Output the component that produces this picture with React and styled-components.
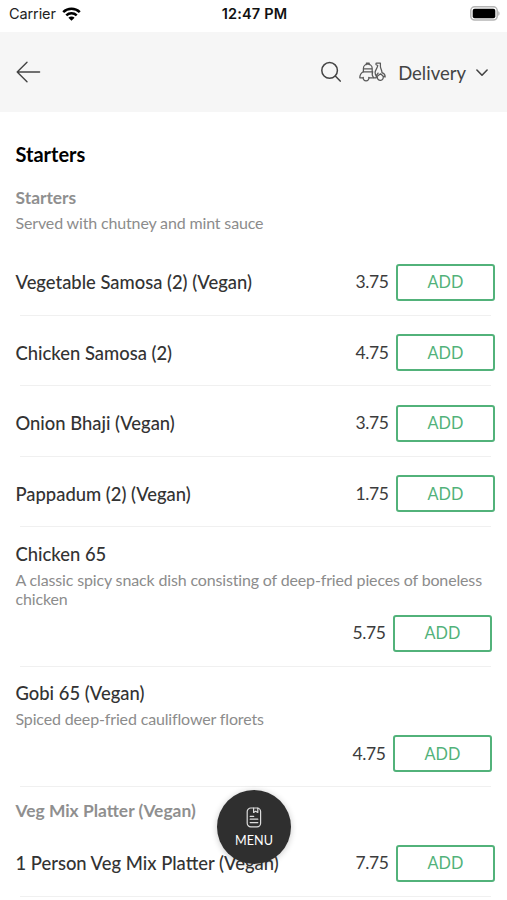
import React from 'react'
import styled, { createGlobalStyle } from 'styled-components'

const GlobalStyle = createGlobalStyle`
    *{
        box-sizing:border-box;
    }
    body{
        margin:0;
        background-color:#fff;
        overflow:hidden;
    }
`

const Container = styled.div`
    position:relative;
    width:507px;
    height:900px;
    overflow:hidden;
    background-color:#fff;
    font-family:Lato, sans-serif;
    color:#333;
    cursor:default;
`

const StatusBar = styled.div`
    display:grid;
    grid-template-columns:1fr auto 1fr;
    align-items:center;
    height:32px;
    padding:0 7px 5px 9px;
    font-family:Inter, sans-serif;
    font-size:14.5px;
    color:#222;
`

const Carrier = styled.div`
    display:flex;
    align-items:center;
    gap:6px;
    letter-spacing:-0.1px;
`

const Clock = styled.div`
    font-weight:600;
    color:#111;
    letter-spacing:0.15px;
`

const Battery = styled.svg`
    justify-self:end;
`

const Header = styled.div`
    display:flex;
    align-items:center;
    height:80px;
    padding:0 18px 0 16px;
    background-color:#f6f6f6;
`

const HeaderActions = styled.div`
    display:flex;
    align-items:center;
    margin-left:auto;
`

const Scooter = styled.svg`
    margin:0 12px 0 17px;
`

const DeliveryLabel = styled.span`
    font-size:18.5px;
    line-height:24px;
    color:#444;
    margin:2px 9px 0 0;
`

const Title = styled.div`
    padding:30px 16px 0 15.5px;
    font-size:20px;
    font-weight:700;
    line-height:24px;
    color:#000;
`

const GroupHeading = styled.div`
    height:${props => props.height}px;
    padding:${props => props.top}px 16px 0 15.5px;
`

const GroupName = styled.div`
    font-size:17.4px;
    font-weight:700;
    line-height:22px;
    color:#8f8f8f;
`

const Description = styled.div`
    margin-top:4px;
    font-size:16px;
    line-height:19.5px;
    letter-spacing:-0.15px;
    color:#8c8c8c;
`

const Row = styled.div`
    display:flex;
    align-items:center;
    height:70.5px;
    padding:4px 12px 0 15.5px;
`

const TallRow = styled.div`
    display:flex;
    flex-direction:column;
    height:${props => props.height}px;
    padding:14.5px 15px 15px 15.5px;
`

const ItemName = styled.div`
    font-size:18.4px;
    font-weight:500;
    line-height:24px;
    color:#333;
`

const Purchase = styled.div`
    display:flex;
    align-items:center;
    gap:7.5px;
    margin:${props => (props.$bottom ? 'auto 0 0 auto' : '0 0 0 auto')};
`

const Price = styled.span`
    font-size:17.5px;
    line-height:22px;
    letter-spacing:-0.4px;
    color:#3c3c3c;
`

const AddButton = styled.button`
    width:99px;
    height:37px;
    padding:0;
    border:2px solid #52b27a;
    border-radius:3px;
    background-color:#fff;
    color:#52b27a;
    font-family:inherit;
    font-size:16.3px;
    line-height:22px;
`

const Divider = styled.div`
    height:1px;
    margin:-1px 16px 0 20px;
    background-color:#f0f0f0;
`

const MenuButton = styled.div`
    position:absolute;
    left:217px;
    top:790px;
    width:74px;
    height:74px;
    display:flex;
    flex-direction:column;
    align-items:center;
    padding-top:17px;
    border-radius:50%;
    background-color:#2f2f2f;
    box-shadow:0 1px 6px rgba(0,0,0,0.22);
    color:#fff;
    font-size:12.6px;
    line-height:16px;
`

const MenuIcon = styled.svg`
    margin-bottom:5px;
`

const simpleItems = [
    { name: 'Vegetable Samosa (2) (Vegan)', price: '3.75' },
    { name: 'Chicken Samosa (2)', price: '4.75' },
    { name: 'Onion Bhaji (Vegan)', price: '3.75' },
    { name: 'Pappadum (2) (Vegan)', price: '1.75' },
]

const describedItems = [
    {
        name: 'Chicken 65',
        description: 'A classic spicy snack dish consisting of deep-fried pieces of boneless chicken',
        price: '5.75',
        height: 139.5,
    },
    {
        name: 'Gobi 65 (Vegan)',
        description: 'Spiced deep-fried cauliflower florets',
        price: '4.75',
        height: 120.5,
    },
]

const Buy = ({ price, bottom }) => (
    <Purchase $bottom={bottom}>
        <Price>{price}</Price>
        <AddButton>ADD</AddButton>
    </Purchase>
)

const SimpleItem = ({ item }) => (
    <>
        <Row>
            <ItemName>{item.name}</ItemName>
            <Buy price={item.price} />
        </Row>
        <Divider />
    </>
)

const DescribedItem = ({ item }) => (
    <>
        <TallRow height={item.height}>
            <ItemName>{item.name}</ItemName>
            <Description>{item.description}</Description>
            <Buy price={item.price} bottom />
        </TallRow>
        <Divider />
    </>
)

const App = () => (
    <Container>
        <GlobalStyle />
        <StatusBar>
            <Carrier>
                Carrier
                <svg width="19" height="14" viewBox="0 0 19 14" fill="none" stroke="#000" strokeWidth="2.5">
                    <path d="M1.2 5.2a11.8 11.8 0 0 1 16.6 0" />
                    <path d="M4.3 8.4a7.4 7.4 0 0 1 10.4 0" />
                    <path d="M9.5 13.8L6.4 10.7a4.4 4.4 0 0 1 6.2 0z" fill="#000" stroke="none" />
                </svg>
            </Carrier>
            <Clock>12:47 PM</Clock>
            <Battery width="30" height="15" viewBox="0 0 30 15">
                <rect x="0.8" y="0.8" width="26.4" height="13.2" rx="3.8" fill="#fff" stroke="#b5b5b5" strokeWidth="1.5" />
                <rect x="2.7" y="2.7" width="22.6" height="9.5" rx="2" fill="#000" />
                <path d="M28.3 5.2c1.6.5 1.6 4 0 4.5z" fill="#aaa" />
            </Battery>
        </StatusBar>
        <Header>
            <svg width="25" height="22" viewBox="0 0 25 22" fill="none" stroke="#444" strokeWidth="1.4" strokeLinecap="round" strokeLinejoin="round">
                <path d="M23.6 11H1.2M11 1.2L1.2 11l9.8 9.8" />
            </svg>
            <HeaderActions>
                <svg width="22" height="22" viewBox="0 0 22 22" fill="none" stroke="#444" strokeWidth="1.5" strokeLinecap="round">
                    <circle cx="9.6" cy="9.4" r="7.8" />
                    <path d="M15.3 15.1l4.9 5" />
                </svg>
                <Scooter width="27" height="20" viewBox="0 0 27 20" fill="none" stroke="#5a5a5a" strokeWidth="1.25" strokeLinecap="round" strokeLinejoin="round">
                    <path d="M4.4 9.8V6.6a4.4 4.4 0 0 1 8.8 0v3.2M7.4 2.5V1.1h2.8v1.4M4.4 6.8h8.8" />
                    <path d="M13.6 9.8H4.2C2.2 11 .8 13.2.8 15.8h3.4M9.9 15.8h7.3c-.2-2.3.7-3.6 2-4.7" />
                    <path d="M13.6 9.8c-.7 2-.4 4.2 1 5.8" />
                    <path d="M21.4 1.2h-3.8c-.8 0-1 1.5 0 1.8l1.1.3c.2 2.4-2.6 4.6-2.6 7.2 0 1.6.5 2.7 1.4 3.6M21.4 1.2v3c0 2.5 1.4 3.6 1.6 6.4 1.9.7 3.3 2.3 3.1 4.4l-1.8-.7-2.8-2.5-3.8 3" />
                    <path d="M4.2 15.4a2.9 2.9 0 1 0 5.7 0" />
                    <path d="M18.3 15.2a3 3 0 1 0 5.9-.6" />
                </Scooter>
                <DeliveryLabel>Delivery</DeliveryLabel>
                <svg width="14" height="9" viewBox="0 0 14 9" fill="none" stroke="#444" strokeWidth="1.6" strokeLinecap="round" strokeLinejoin="round">
                    <path d="M1.9 2l5.1 5.2L12.1 2" />
                </svg>
            </HeaderActions>
        </Header>
        <Title>Starters</Title>
        <GroupHeading height={79} top={21}>
            <GroupName>Starters</GroupName>
            <Description>Served with chutney and mint sauce</Description>
        </GroupHeading>
        {simpleItems.map(item => (
            <SimpleItem key={item.name} item={item} />
        ))}
        {describedItems.map(item => (
            <DescribedItem key={item.name} item={item} />
        ))}
        <GroupHeading height={39} top={13}>
            <GroupName>Veg Mix Platter (Vegan)</GroupName>
        </GroupHeading>
        <SimpleItem item={{ name: '1 Person Veg Mix Platter (Vegan)', price: '7.75' }} />
        <MenuButton>
            <MenuIcon width="16" height="21" viewBox="0 0 16 21" fill="none" stroke="#ddd" strokeWidth="1.2" strokeLinecap="round" strokeLinejoin="round">
                <rect x="1.2" y="1" width="13.4" height="18.8" rx="3.6" />
                <path d="M7.6 1.2v4.2l2.1-1.2 2.1 1.2V1.2M4.2 9.4h3.5M4.2 12.2h7.6M4.2 15.6h7.6" />
            </MenuIcon>
            MENU
        </MenuButton>
    </Container>
)

export default App
